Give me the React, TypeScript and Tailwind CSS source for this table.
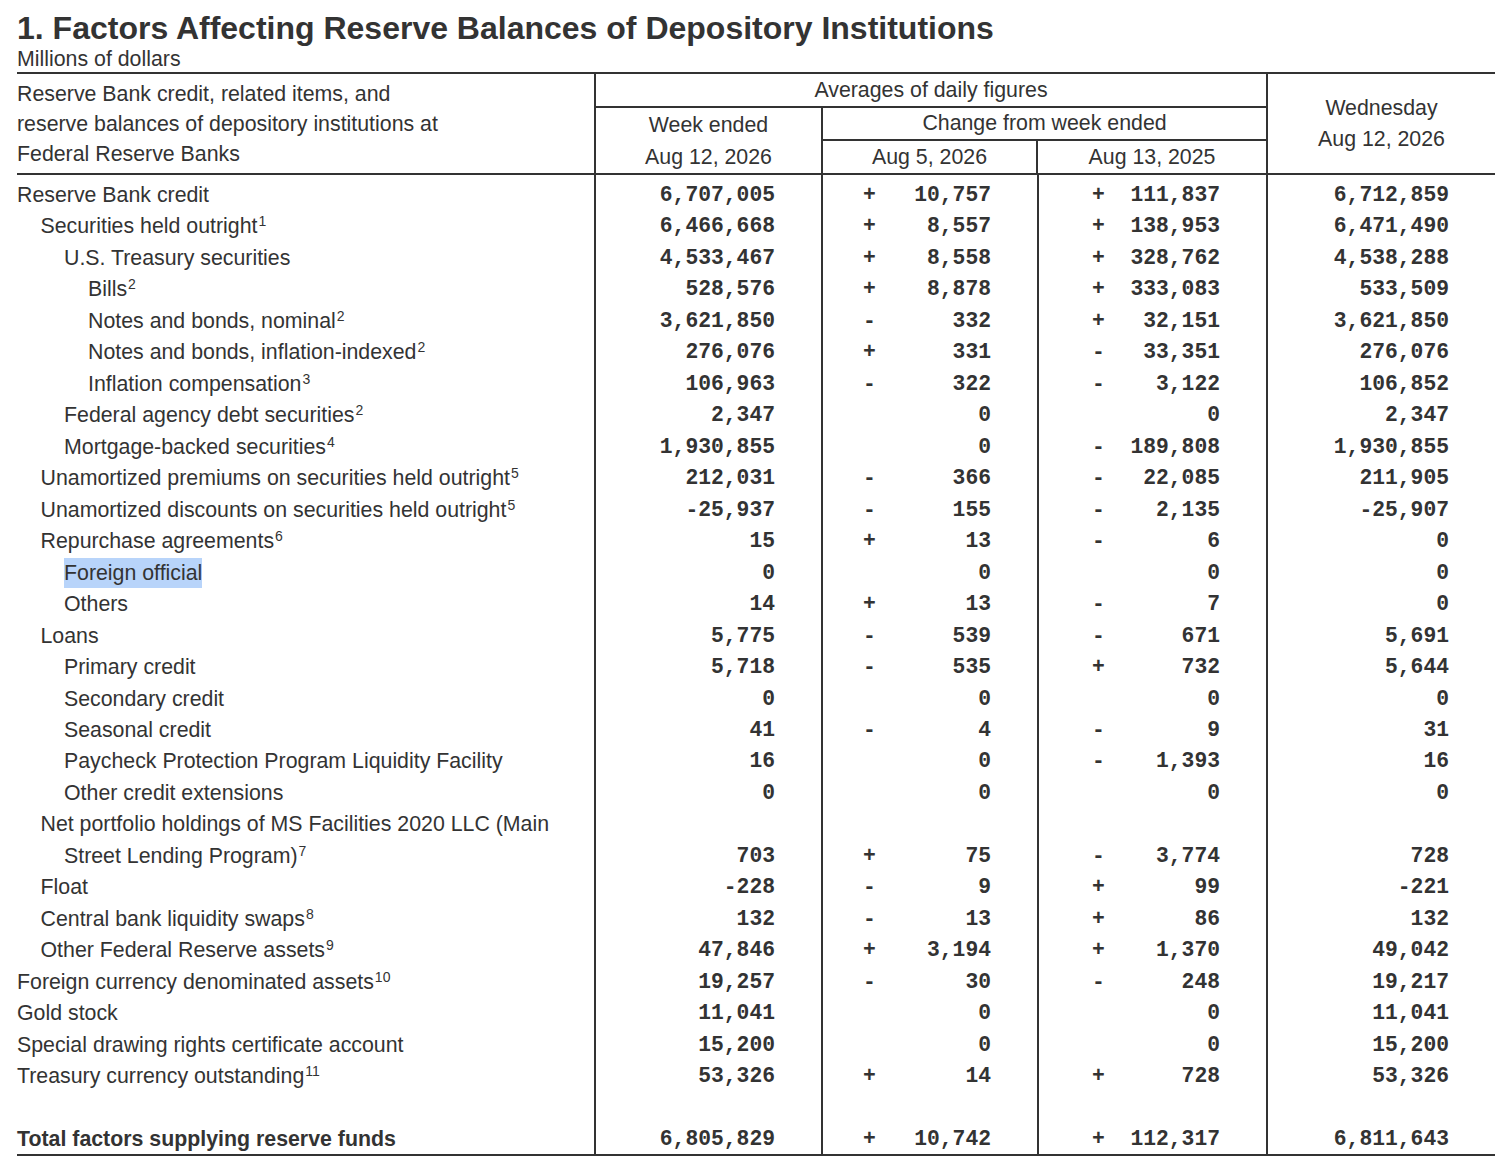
import React from 'react';

type Row = {
  label: string;
  sup?: string;
  level: number;
  week?: string;
  ch1?: string;
  ch2?: string;
  wed?: string;
  mark?: boolean;
  bold?: boolean;
};

const rows: Row[] = [
  { label: 'Reserve Bank credit', level: 0, week: '6,707,005', ch1: '+ 10,757', ch2: '+ 111,837', wed: '6,712,859' },
  { label: 'Securities held outright', sup: '1', level: 1, week: '6,466,668', ch1: '+ 8,557', ch2: '+ 138,953', wed: '6,471,490' },
  { label: 'U.S. Treasury securities', level: 2, week: '4,533,467', ch1: '+ 8,558', ch2: '+ 328,762', wed: '4,538,288' },
  { label: 'Bills', sup: '2', level: 3, week: '528,576', ch1: '+ 8,878', ch2: '+ 333,083', wed: '533,509' },
  { label: 'Notes and bonds, nominal', sup: '2', level: 3, week: '3,621,850', ch1: '- 332', ch2: '+ 32,151', wed: '3,621,850' },
  { label: 'Notes and bonds, inflation-indexed', sup: '2', level: 3, week: '276,076', ch1: '+ 331', ch2: '- 33,351', wed: '276,076' },
  { label: 'Inflation compensation', sup: '3', level: 3, week: '106,963', ch1: '- 322', ch2: '- 3,122', wed: '106,852' },
  { label: 'Federal agency debt securities', sup: '2', level: 2, week: '2,347', ch1: '0', ch2: '0', wed: '2,347' },
  { label: 'Mortgage-backed securities', sup: '4', level: 2, week: '1,930,855', ch1: '0', ch2: '- 189,808', wed: '1,930,855' },
  { label: 'Unamortized premiums on securities held outright', sup: '5', level: 1, week: '212,031', ch1: '- 366', ch2: '- 22,085', wed: '211,905' },
  { label: 'Unamortized discounts on securities held outright', sup: '5', level: 1, week: '-25,937', ch1: '- 155', ch2: '- 2,135', wed: '-25,907' },
  { label: 'Repurchase agreements', sup: '6', level: 1, week: '15', ch1: '+ 13', ch2: '- 6', wed: '0' },
  { label: 'Foreign official', level: 2, week: '0', ch1: '0', ch2: '0', wed: '0', mark: true },
  { label: 'Others', level: 2, week: '14', ch1: '+ 13', ch2: '- 7', wed: '0' },
  { label: 'Loans', level: 1, week: '5,775', ch1: '- 539', ch2: '- 671', wed: '5,691' },
  { label: 'Primary credit', level: 2, week: '5,718', ch1: '- 535', ch2: '+ 732', wed: '5,644' },
  { label: 'Secondary credit', level: 2, week: '0', ch1: '0', ch2: '0', wed: '0' },
  { label: 'Seasonal credit', level: 2, week: '41', ch1: '- 4', ch2: '- 9', wed: '31' },
  { label: 'Paycheck Protection Program Liquidity Facility', level: 2, week: '16', ch1: '0', ch2: '- 1,393', wed: '16' },
  { label: 'Other credit extensions', level: 2, week: '0', ch1: '0', ch2: '0', wed: '0' },
  { label: 'Net portfolio holdings of MS Facilities 2020 LLC (Main', level: 1 },
  { label: 'Street Lending Program)', sup: '7', level: 2, week: '703', ch1: '+ 75', ch2: '- 3,774', wed: '728' },
  { label: 'Float', level: 1, week: '-228', ch1: '- 9', ch2: '+ 99', wed: '-221' },
  { label: 'Central bank liquidity swaps', sup: '8', level: 1, week: '132', ch1: '- 13', ch2: '+ 86', wed: '132' },
  { label: 'Other Federal Reserve assets', sup: '9', level: 1, week: '47,846', ch1: '+ 3,194', ch2: '+ 1,370', wed: '49,042' },
  { label: 'Foreign currency denominated assets', sup: '10', level: 0, week: '19,257', ch1: '- 30', ch2: '- 248', wed: '19,217' },
  { label: 'Gold stock', level: 0, week: '11,041', ch1: '0', ch2: '0', wed: '11,041' },
  { label: 'Special drawing rights certificate account', level: 0, week: '15,200', ch1: '0', ch2: '0', wed: '15,200' },
  { label: 'Treasury currency outstanding', sup: '11', level: 0, week: '53,326', ch1: '+ 14', ch2: '+ 728', wed: '53,326' },
  { label: '', level: 0 },
  { label: 'Total factors supplying reserve funds', level: 0, week: '6,805,829', ch1: '+ 10,742', ch2: '+ 112,317', wed: '6,811,643', bold: true },
];

const indent = ['pl-0', 'pl-[23.5px]', 'pl-[47px]', 'pl-[71px]'];

const mono = "font-['Liberation_Mono',monospace] font-bold pr-[46px] pt-[2px] text-right";

const Change = ({ value }: { value?: string }) => {
  if (!value) return null;
  const signed = value.startsWith('+ ') || value.startsWith('- ');
  return (
    <span className="inline-flex w-[128px] justify-between">
      <span>{signed ? value[0] : ''}</span>
      <span>{signed ? value.slice(2) : value}</span>
    </span>
  );
};

const TableRow = ({ row }: { row: Row }) => (
  <div className="flex h-[31.47px] leading-[31.47px] whitespace-nowrap">
    <div className={`w-[577px] pt-[2px] ${indent[row.level]} ${row.bold ? 'font-bold' : ''}`}>
      {row.mark ? (
        <span className="inline-block bg-[#b8d4fa] leading-[30px]">{row.label}</span>
      ) : (
        row.label
      )}
      {row.sup && <sup className="relative -top-[7px] ml-[1px] align-baseline text-[14px]">{row.sup}</sup>}
    </div>
    <div className={`w-[227px] border-l-2 border-[#333] ${mono}`}>{row.week}</div>
    <div className={`w-[216px] border-l-2 border-[#333] ${mono}`}>
      <Change value={row.ch1} />
    </div>
    <div className={`w-[229px] border-l-2 border-[#333] ${mono}`}>
      <Change value={row.ch2} />
    </div>
    <div className={`w-[229px] border-l-2 border-[#333] ${mono}`}>{row.wed}</div>
  </div>
);

export default function App() {
  return (
    <div className="min-h-screen bg-white pl-[17px] pt-[9px] text-[#333] text-[21.33px] font-['Liberation_Sans',Arial,sans-serif]">
      <div className="w-[1478px]">
        <h1 className="text-[32px] font-bold leading-[38px]">
          1. Factors Affecting Reserve Balances of Depository Institutions
        </h1>
        <p className="leading-[25px]">Millions of dollars</p>

        <div className="flex border-t-2 border-b-2 border-[#333]">
          <div className="w-[577px] pt-[5px] leading-[30px]">
            <div>Reserve Bank credit, related items, and</div>
            <div>reserve balances of depository institutions at</div>
            <div>Federal Reserve Banks</div>
          </div>
          <div className="flex w-[672px] flex-col border-l-2 border-[#333]">
            <div className="flex h-[34px] items-center justify-center border-b-2 border-[#333] pt-[1px]">
              Averages of daily figures
            </div>
            <div className="flex">
              <div className="w-[225px] pt-[1px] text-center leading-[32px]">
                <div>Week ended</div>
                <div>Aug 12, 2026</div>
              </div>
              <div className="flex w-[445px] flex-col border-l-2 border-[#333]">
                <div className="flex h-[33px] items-center justify-center border-b-2 border-[#333] pt-[1px]">
                  Change from week ended
                </div>
                <div className="flex h-[32px]">
                  <div className="flex w-[214px] items-center justify-center pt-[1px]">Aug 5, 2026</div>
                  <div className="flex w-[231px] items-center justify-center border-l-2 border-[#333] pt-[1px]">
                    Aug 13, 2025
                  </div>
                </div>
              </div>
            </div>
          </div>
          <div className="flex w-[229px] flex-col items-center justify-center border-l-2 border-[#333] leading-[31px]">
            <div>Wednesday</div>
            <div>Aug 12, 2026</div>
          </div>
        </div>

        <div className="border-b-2 border-[#333]">
          <div className="flex h-[3px]">
            <div className="w-[577px]" />
            <div className="w-[227px] border-l-2 border-[#333]" />
            <div className="w-[216px] border-l-2 border-[#333]" />
            <div className="w-[229px] border-l-2 border-[#333]" />
            <div className="w-[229px] border-l-2 border-[#333]" />
          </div>
          {rows.map((row, i) => (
            <TableRow key={i} row={row} />
          ))}
        </div>
      </div>
    </div>
  );
}
